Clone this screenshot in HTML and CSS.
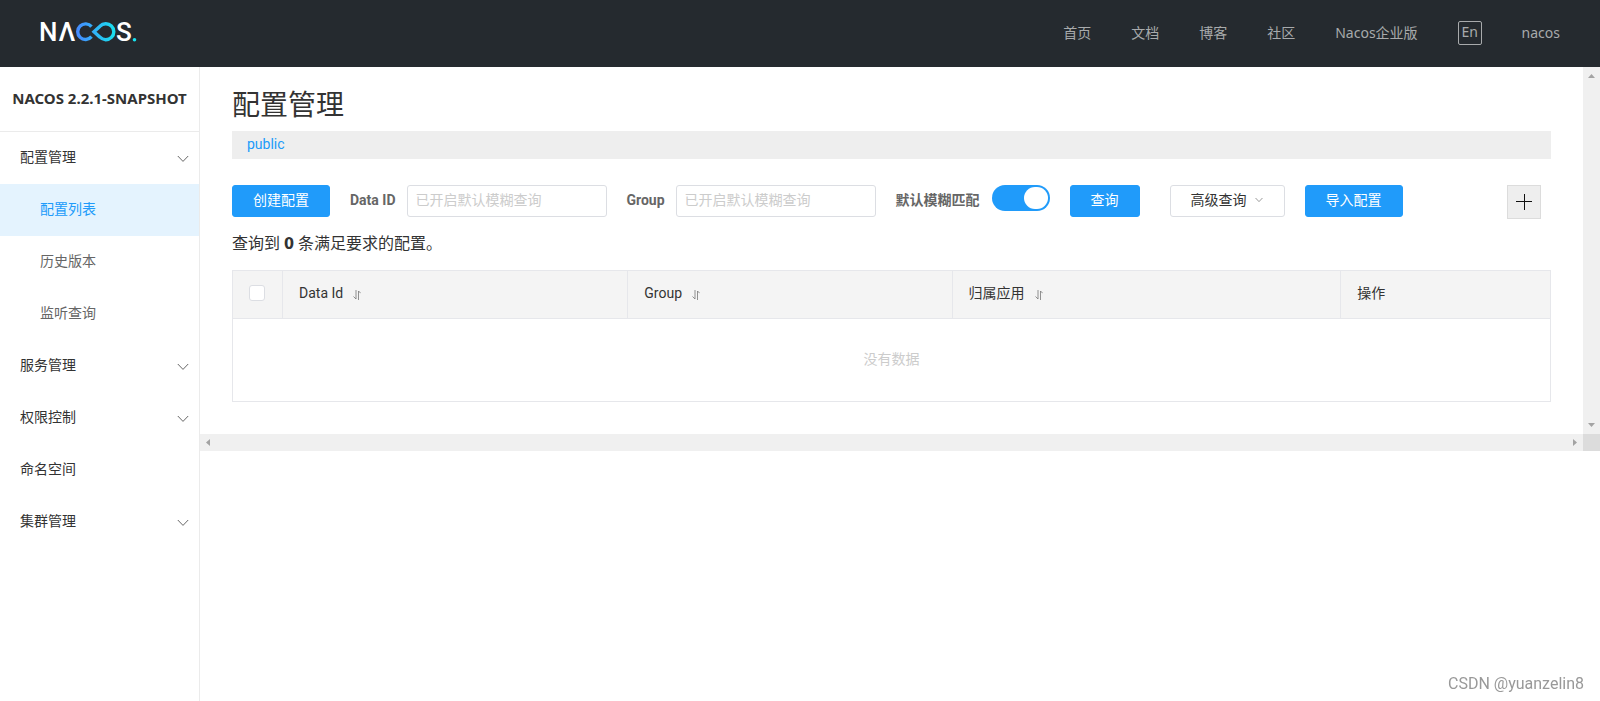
FILE: index.html
```html
<!DOCTYPE html>
<html lang="zh-CN">
<head>
<meta charset="utf-8">
<title>Nacos</title>
<link rel="stylesheet" href="styles.css">
</head>
<body>
<svg class="defs" aria-hidden="true">
  <symbol id="chevron" viewBox="0 0 12 8"><path d="M.8 1 6 6.4 11.2 1" fill="none" stroke="currentColor"/></symbol>
  <symbol id="sort" viewBox="0 0 8 10"><path d="M3 0v9L.5 6.500M5.500 10V1l2.200 2.200" fill="none" stroke="currentColor" stroke-width=".8"/></symbol>
</svg>
<header class="topbar">
  <a class="logo" href="#" aria-label="Nacos">
    <svg width="100" height="40" viewBox="-2 -9 100 40">
      <defs>
        <linearGradient id="loop" gradientUnits="userSpaceOnUse" x1="36" y1="0" x2="76" y2="0">
          <stop offset="0" stop-color="#4788ff"/><stop offset="1" stop-color="#17e3ef"/>
        </linearGradient>
      </defs>
      <g class="logo-type">
        <text x="-1" y="19">N</text><text x="18.500" y="19">Λ</text><text x="76" y="19">S</text>
      </g>
      <path d="M51.500 4.700A7.800 7.800 0 1 0 51.500 14.700M60 15.200 54 9.700 60 4.200A8 8 0 1 1 60 15.200L58 13.400" fill="none" stroke="url(#loop)" stroke-width="3.400"/>
      <circle cx="94.500" cy="17.700" r="1.800" fill="#17e3ef"/>
    </svg>
  </a>
  <nav class="topnav">
    <a href="#">首页</a>
    <a href="#">文档</a>
    <a href="#">博客</a>
    <a href="#">社区</a>
    <a href="#">Nacos企业版</a>
    <button class="lang" type="button">En</button>
    <a href="#">nacos</a>
  </nav>
</header>
<div class="layout">
  <aside class="sidebar">
    <h1 class="product">NACOS 2.2.1-SNAPSHOT</h1>
    <nav class="menu">
      <a class="item" href="#">配置管理<svg class="arrow"><use href="#chevron"/></svg></a>
      <a class="item sub active" href="#">配置列表</a>
      <a class="item sub" href="#">历史版本</a>
      <a class="item sub" href="#">监听查询</a>
      <a class="item" href="#">服务管理<svg class="arrow"><use href="#chevron"/></svg></a>
      <a class="item" href="#">权限控制<svg class="arrow"><use href="#chevron"/></svg></a>
      <a class="item" href="#">命名空间</a>
      <a class="item" href="#">集群管理<svg class="arrow"><use href="#chevron"/></svg></a>
    </nav>
  </aside>
  <div class="viewport">
    <main class="page">
      <h2 class="title">配置管理</h2>
      <div class="namespaces"><a href="#">public</a></div>
      <form class="toolbar">
        <button class="btn primary" type="button">创建配置</button>
        <div class="field"><label for="data-id">Data ID</label><input class="text" id="data-id" type="text" placeholder="已开启默认模糊查询"></div>
        <div class="field"><label for="group">Group</label><input class="text" id="group" type="text" placeholder="已开启默认模糊查询"></div>
        <div class="field wide"><label for="fuzzy">默认模糊匹配</label><input class="switch" id="fuzzy" type="checkbox" role="switch" checked></div>
        <button class="btn primary search" type="button">查询</button>
        <button class="btn advanced" type="button">高级查询<svg class="caret"><use href="#chevron"/></svg></button>
        <button class="btn primary" type="button">导入配置</button>
        <button class="add" type="button" aria-label="添加"><svg width="16" height="16"><path d="M8.500 0v16M0 7.500h16" stroke="#111"/></svg></button>
      </form>
      <p class="summary">查询到 <strong>0</strong> 条满足要求的配置。</p>
      <table class="configs">
        <colgroup><col class="c-check"><col class="c-id"><col class="c-group"><col class="c-app"><col class="c-ops"></colgroup>
        <thead>
          <tr>
            <th class="check"><input type="checkbox" aria-label="全选"></th>
            <th>Data Id<svg class="sort"><use href="#sort"/></svg></th>
            <th>Group<svg class="sort"><use href="#sort"/></svg></th>
            <th>归属应用<svg class="sort"><use href="#sort"/></svg></th>
            <th>操作</th>
          </tr>
        </thead>
        <tbody><tr><td class="empty" colspan="5">没有数据</td></tr></tbody>
      </table>
    </main>
    <div class="bar vertical" aria-hidden="true">
      <svg width="17" height="17"><path d="M5 11h7L8.500 7z"/></svg>
      <svg width="17" height="17"><path d="M5 6h7l-3.500 4z"/></svg>
    </div>
    <div class="bar horizontal" aria-hidden="true">
      <svg width="17" height="17"><path d="M10 5v7L6 8.500z"/></svg>
      <svg width="17" height="17"><path d="M7 5v7l4-3.500z"/></svg>
    </div>
    <div class="corner"></div>
  </div>
</div>
<div class="watermark">CSDN @yuanzelin8</div>
</body>
</html>
```

FILE: styles.css
```css
* { box-sizing: border-box; }
body {
  margin: 0;
  min-height: 100vh;
  display: flex;
  flex-direction: column;
  background: #fff;
  color: #333;
  font: 14px/20px Roboto, "Noto Sans CJK SC", sans-serif;
}
a { color: inherit; text-decoration: none; }
button, input { font: inherit; }
.defs { display: none; }

.topbar {
  height: 67px;
  padding: 0 40px 2px 38px;
  display: flex;
  align-items: center;
  justify-content: space-between;
  background: #252a2f;
}
.logo svg { display: block; }
.logo-type { fill: #fff; font: 500 26px/30px Roboto, sans-serif; }
.topnav {
  display: flex;
  align-items: center;
  gap: 40px;
  color: #a8aaac;
  font-family: "Noto Sans", "Noto Sans CJK SC", sans-serif;
}
.lang {
  width: 24px;
  height: 24px;
  padding: 0 0 2px;
  border: 1px solid #a8aaac;
  border-radius: 2px;
  background: none;
  color: inherit;
  line-height: 20px;
}

.layout { flex: 1; display: flex; }
.sidebar { width: 200px; border-right: 1px solid #ebebeb; }
.product {
  margin: 0;
  height: 65px;
  border-bottom: 1px solid #ebebeb;
  font: bold 15px/62px "Noto Sans", sans-serif;
  text-align: center;
  white-space: nowrap;
}
.menu { display: flex; flex-direction: column; }
.item {
  height: 52px;
  padding: 0 10px 2px 20px;
  display: flex;
  align-items: center;
  justify-content: space-between;
}
.sub { padding-left: 40px; color: #666; }
.active { background: #e4f3fe; color: #209bfa; }
.arrow { width: 12px; height: 8px; margin-top: 3px; color: #666; }

.viewport {
  flex: 1;
  min-width: 0;
  display: grid;
  grid-template-columns: 1fr 17px;
  align-content: start;
}
.page { padding: 19px 32px 32px; }
.title { margin: 0 0 5px; font-size: 28px; line-height: 40px; font-weight: 400; }
.namespaces {
  height: 28px;
  padding: 0 15px;
  background: #eee;
  color: #209bfa;
  line-height: 27px;
}
.toolbar { margin-top: 26px; display: flex; align-items: flex-start; gap: 20px; }
.btn {
  height: 32px;
  padding: 0 20px 2px;
  border: 1px solid #dcdee3;
  border-radius: 3px;
  background: #fff;
  color: #333;
  white-space: nowrap;
}
.primary { border-color: #209bfa; background: #209bfa; color: #fff; }
.search { margin-right: 10px; }
.advanced { display: flex; align-items: center; gap: 8px; }
.caret { width: 8px; height: 6px; margin-right: 1px; color: #666; }
.field { display: flex; gap: 11px; }
.wide { gap: 12px; }
.field label { color: #666; font-weight: 700; line-height: 30px; white-space: nowrap; }
.text {
  width: 200px;
  height: 32px;
  padding: 0 8px 2px;
  border: 1px solid #dcdee3;
  border-radius: 3px;
  background: #fff;
}
.text::placeholder { color: #ccc; }
.switch {
  appearance: none;
  width: 58px;
  height: 26px;
  margin: 0;
  padding: 2px;
  display: flex;
  justify-content: flex-end;
  border-radius: 13px;
  background: #209bfa;
}
.switch::before { content: ""; width: 24px; height: 22px; border-radius: 12px; background: #fff; }
.add {
  width: 34px;
  height: 34px;
  margin: 0 10px 0 auto;
  padding: 0;
  display: grid;
  place-items: center;
  border: 1px solid #dcdcdc;
  background: #eee;
}
.summary { margin: 13px 0 14px; font-size: 16px; line-height: 24px; }
.summary strong { font-family: "DejaVu Sans Condensed", "DejaVu Sans", sans-serif; }

.configs { width: 100%; table-layout: fixed; border-collapse: collapse; border: 1px solid #e6e7eb; }
.c-check { width: 50px; }
.c-id { width: 26.200%; }
.c-group { width: 24.600%; }
.c-app { width: 29.500%; }
.configs th {
  height: 48px;
  padding: 0 16px 4px;
  border: 1px solid #e6e7eb;
  background: #f4f4f4;
  font-weight: 400;
  text-align: left;
}
.check input {
  appearance: none;
  display: block;
  width: 16px;
  height: 16px;
  margin: 0;
  border: 1px solid #dcdee3;
  border-radius: 3px;
  background: #fff;
}
.sort { width: 8px; height: 10px; margin-left: 10px; vertical-align: -2px; color: #777; }
.empty { height: 83px; padding: 0 0 2px; color: #ccc; text-align: center; }

.bar { display: flex; justify-content: space-between; background: #f0f0f0; fill: #a3a3a3; }
.vertical { flex-direction: column; }
.corner { background: #dcdcdc; }
.watermark {
  position: fixed;
  right: 16px;
  bottom: 6px;
  color: #999;
  font: 16px/22px Roboto, sans-serif;
}
```
